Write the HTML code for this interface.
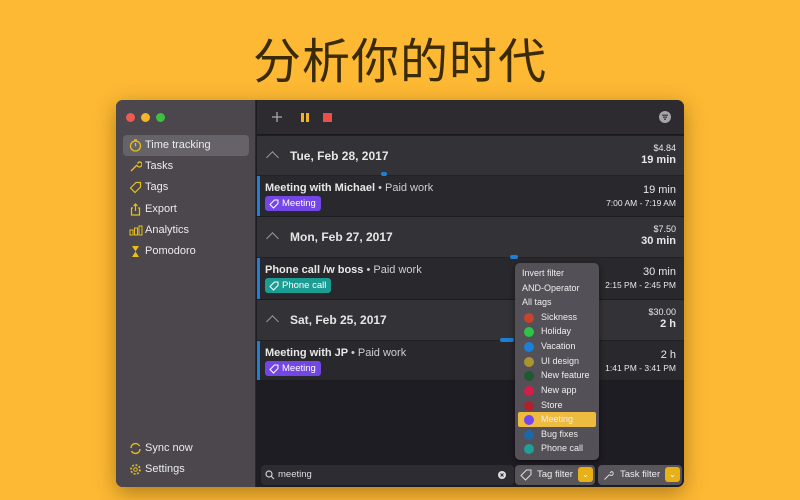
<!DOCTYPE html>
<html><head><meta charset="utf-8"><style>
*{margin:0;padding:0;box-sizing:border-box}
body{width:800px;height:500px;background:#fdb933;font-family:"Liberation Sans","Noto Sans CJK SC",sans-serif;position:relative;overflow:hidden}
.title{position:absolute;left:0;width:800px;top:22px;text-align:center;font-size:48px;color:#3a2a05;font-family:"Noto Sans CJK SC",sans-serif;letter-spacing:1px}
.win{position:absolute;left:116px;top:100px;width:568px;height:387px;border-radius:7px;overflow:hidden;background:#1f1d24;box-shadow:0 6px 20px rgba(80,50,0,.45)}
.side{position:absolute;left:0;top:0;width:140px;height:387px;background:#4b474d;border-right:1px solid #2a282c}
.dot{position:absolute;top:13px;width:9px;height:9px;border-radius:50%}
.nav{position:absolute;left:7px;width:126px;height:21px;border-radius:4px;color:#ececec;font-size:11px;line-height:21px;padding-left:22px}
.nav svg{position:absolute;left:6px;top:4px}
.sel{background:#66626a}
.tb{position:absolute;left:141px;top:0;width:427px;height:35px;background:#2d2b30;border-bottom:1px solid #1a191c}
.hdr{position:absolute;left:141px;width:427px;background:#333236;border-bottom:1px solid #222}
.ent{position:absolute;left:141px;width:427px;background:#29282c;border-bottom:1px solid #1c1b1e}
.hdr .d{position:absolute;left:33px;font-size:12px;font-weight:bold;color:#e6e6e6}
.chev{position:absolute;left:11px;width:9px;height:9px;border-left:1.5px solid #999;border-top:1.5px solid #999;transform:rotate(45deg)}
.r{position:absolute;right:8px;text-align:right;color:#e8e8e8}
.ent .bar{position:absolute;left:0;top:0;bottom:0;width:3px;background:#1f7ed6}
.ent .n{position:absolute;left:8px;top:6px;font-size:11px;font-weight:bold;color:#e8e8e8}
.ent .n span{font-weight:normal;color:#cfcfcf}
.tag{position:absolute;left:8px;top:20px;height:15px;border-radius:3px;font-size:9.5px;color:#fff;line-height:15px;padding:0 5px 0 17px}
.tag svg{position:absolute;left:4px;top:3px}
.bot{position:absolute;left:141px;top:363px;width:427px;height:24px;background:#1f1d24}
.pop{position:absolute;left:399px;top:163px;width:84px;height:197px;background:#545058;border-radius:5px;box-shadow:0 2px 6px rgba(0,0,0,.5)}
.pi{position:absolute;left:7px;font-size:9px;color:#eee}
.pc{position:absolute;left:9px;width:10px;height:10px;border-radius:50%}
.pl{position:absolute;left:26px;font-size:9px;color:#eee}
.sc{position:absolute;height:4px;border-radius:2px;background:#1f7ed6}
</style></head><body>
<div class="title">分析你的时代</div>
<div class="win">
 <div class="side">
  <div class="dot" style="left:10px;background:#ee5a52"></div>
  <div class="dot" style="left:25px;background:#f4b52b"></div>
  <div class="dot" style="left:40px;background:#3ec041"></div>
  <div class="nav sel" style="top:35px"><svg width="13" height="13" viewBox="0 0 13 13"><circle cx="6.5" cy="7" r="5" fill="none" stroke="#e7c11c" stroke-width="1.3"/><path d="M6.5 4v3.2M5 1h3" stroke="#e7c11c" stroke-width="1.3"/></svg>Time tracking</div>
  <div class="nav" style="top:56px"><svg width="13" height="13" viewBox="0 0 13 13"><path d="M2 11l6-6M8 5a2.5 2.5 0 1 0 2-3l-1.5 1.5" fill="none" stroke="#e7c11c" stroke-width="1.3"/></svg>Tasks</div>
  <div class="nav" style="top:77px"><svg width="13" height="13" viewBox="0 0 13 13"><path d="M1.5 7L7 1.5h4.5V6L6 11.5z" fill="none" stroke="#e7c11c" stroke-width="1.2"/></svg>Tags</div>
  <div class="nav" style="top:99px"><svg width="13" height="13" viewBox="0 0 13 13"><path d="M4 5H2.5v7h8V5H9M6.5 8V1M4.5 3l2-2 2 2" fill="none" stroke="#e7c11c" stroke-width="1.2"/></svg>Export</div>
  <div class="nav" style="top:120px"><svg width="14" height="13" viewBox="0 0 14 13"><rect x="1" y="6" width="3" height="5" fill="none" stroke="#e7c11c"/><rect x="5.5" y="4" width="3" height="7" fill="none" stroke="#e7c11c"/><rect x="10" y="2" width="3" height="9" fill="none" stroke="#e7c11c"/></svg>Analytics</div>
  <div class="nav" style="top:141px"><svg width="13" height="13" viewBox="0 0 13 13"><path d="M3 1h7L6.5 6.5zM3 12h7L6.5 6.5z" fill="#e7c11c"/></svg>Pomodoro</div>
  <div class="nav" style="top:338px"><svg width="13" height="13" viewBox="0 0 13 13"><path d="M2 6a4.5 4.5 0 0 1 8.5-2M11 7a4.5 4.5 0 0 1-8.5 2" fill="none" stroke="#e7c11c" stroke-width="1.4"/></svg>Sync now</div>
  <div class="nav" style="top:359px"><svg width="13" height="13" viewBox="0 0 13 13"><circle cx="6.5" cy="6.5" r="4.5" fill="none" stroke="#e7c11c" stroke-width="1.6" stroke-dasharray="2 1.5"/><circle cx="6.5" cy="6.5" r="1.8" fill="none" stroke="#e7c11c"/></svg>Settings</div>
 </div>
 <div class="tb">
  <svg style="position:absolute;left:14px;top:11px" width="12" height="12"><path d="M6 1v10M1 6h10" stroke="#aaa" stroke-width="1.3"/></svg>
  <div style="position:absolute;left:44px;top:13px;width:3px;height:9px;background:#f2b51e"></div>
  <div style="position:absolute;left:49px;top:13px;width:3px;height:9px;background:#f2b51e"></div>
  <div style="position:absolute;left:66px;top:13px;width:9px;height:9px;background:#ec4e4a"></div>
  <svg style="position:absolute;left:402px;top:11px" width="12" height="12"><circle cx="6" cy="6" r="6" fill="#a5a5a8"/><path d="M3 4.2h6M4 6.2h4M5 8.2h2" stroke="#2d2b30" stroke-width="1.1"/></svg>
 </div>
 <div class="hdr" style="top:36px;height:40px"><div class="chev" style="top:17px"></div><div class="d" style="top:13px">Tue, Feb 28, 2017</div><div class="r" style="top:7px;font-size:9px">$4.84</div><div class="r" style="top:18px;font-size:11px;font-weight:bold">19 min</div></div>
 <div class="ent" style="top:76px;height:41px"><div class="bar"></div><div class="n">Meeting with Michael <span>• Paid work</span></div><div class="tag" style="background:#7347e6"><svg width="10" height="10" viewBox="0 0 10 10"><path d="M1 5.5L5.5 1H9v3.5L4.5 9z" fill="none" stroke="#fff"/></svg>Meeting</div><div class="r" style="top:8px;font-size:11px">19 min</div><div class="r" style="top:22px;font-size:8.5px">7:00 AM - 7:19 AM</div></div>
 <div class="hdr" style="top:117px;height:41px"><div class="chev" style="top:17px"></div><div class="d" style="top:13px">Mon, Feb 27, 2017</div><div class="r" style="top:7px;font-size:9px">$7.50</div><div class="r" style="top:18px;font-size:11px;font-weight:bold">30 min</div></div>
 <div class="ent" style="top:158px;height:42px"><div class="bar"></div><div class="n">Phone call /w boss <span>• Paid work</span></div><div class="tag" style="background:#1b9d93"><svg width="10" height="10" viewBox="0 0 10 10"><path d="M1 5.5L5.5 1H9v3.5L4.5 9z" fill="none" stroke="#fff"/></svg>Phone call</div><div class="r" style="top:8px;font-size:11px">30 min</div><div class="r" style="top:22px;font-size:8.5px">2:15 PM - 2:45 PM</div></div>
 <div class="hdr" style="top:200px;height:41px"><div class="chev" style="top:17px"></div><div class="d" style="top:13px">Sat, Feb 25, 2017</div><div class="r" style="top:7px;font-size:9px">$30.00</div><div class="r" style="top:18px;font-size:11px;font-weight:bold">2 h</div></div>
 <div class="ent" style="top:241px;height:40px"><div class="bar"></div><div class="n">Meeting with JP <span>• Paid work</span></div><div class="tag" style="background:#7347e6"><svg width="10" height="10" viewBox="0 0 10 10"><path d="M1 5.5L5.5 1H9v3.5L4.5 9z" fill="none" stroke="#fff"/></svg>Meeting</div><div class="r" style="top:8px;font-size:11px">2 h</div><div class="r" style="top:22px;font-size:8.5px">1:41 PM - 3:41 PM</div></div>
 <div class="sc" style="left:265px;top:72px;width:6px"></div>
 <div class="sc" style="left:394px;top:155px;width:8px"></div>
 <div class="sc" style="left:384px;top:238px;width:14px"></div>
 <div class="bot">
  <div style="position:absolute;left:4px;top:2px;width:253px;height:20px;background:#2e2c33;border-radius:4px"></div>
  <svg style="position:absolute;left:8px;top:7px" width="10" height="10"><circle cx="4" cy="4" r="3" fill="none" stroke="#ccc" stroke-width="1.2"/><path d="M6.3 6.3L9 9" stroke="#ccc" stroke-width="1.2"/></svg>
  <div style="position:absolute;left:21px;top:6px;font-size:9.5px;color:#ddd">meeting</div>
  <svg style="position:absolute;left:241px;top:8px" width="8" height="8"><circle cx="4" cy="4" r="4" fill="#ddd"/><path d="M2.5 2.5l3 3M5.5 2.5l-3 3" stroke="#2e2c33" stroke-width="1"/></svg>
  <div style="position:absolute;left:258px;top:2px;width:80px;height:20px;background:#57545a;border-radius:4px"></div>
  <svg style="position:absolute;left:263px;top:6px" width="12" height="12" viewBox="0 0 12 12"><path d="M1 6.5L6.5 1H11v4.5L5.5 11z" fill="none" stroke="#ddd"/></svg>
  <div style="position:absolute;left:280px;top:6px;font-size:9.5px;color:#eee">Tag filter</div>
  <div style="position:absolute;left:321px;top:4px;width:15px;height:15px;background:#e8b117;border-radius:3px;color:#fff;font-size:8px;text-align:center;line-height:15px">⌄</div>
  <div style="position:absolute;left:341px;top:2px;width:84px;height:20px;background:#57545a;border-radius:4px"></div>
  <svg style="position:absolute;left:346px;top:6px" width="12" height="12"><path d="M1.5 10.5l5-5M6.5 5.5a2 2 0 1 0 2-3L7 4" fill="none" stroke="#ddd"/></svg>
  <div style="position:absolute;left:363px;top:6px;font-size:9.5px;color:#eee">Task filter</div>
  <div style="position:absolute;left:408px;top:4px;width:15px;height:15px;background:#e8b117;border-radius:3px;color:#fff;font-size:8px;text-align:center;line-height:15px">⌄</div>
 </div>
 <div class="pop">
  <div class="pi" style="top:5px">Invert filter</div>
  <div class="pi" style="top:20px">AND-Operator</div>
  <div class="pi" style="top:34px">All tags</div>
  <div style="position:absolute;left:3px;top:149px;width:78px;height:15px;background:#ecbb3f;border-radius:2px"></div>
  <div class="pc" style="top:50px;background:#c8432c"></div><div class="pl" style="top:49px">Sickness</div>
  <div class="pc" style="top:64px;background:#2ec447"></div><div class="pl" style="top:63px">Holiday</div>
  <div class="pc" style="top:79px;background:#1c7fd8"></div><div class="pl" style="top:78px">Vacation</div>
  <div class="pc" style="top:94px;background:#a99431"></div><div class="pl" style="top:93px">UI design</div>
  <div class="pc" style="top:108px;background:#1d5a2e"></div><div class="pl" style="top:107px">New feature</div>
  <div class="pc" style="top:123px;background:#d51d4a"></div><div class="pl" style="top:122px">New app</div>
  <div class="pc" style="top:138px;background:#b0212e"></div><div class="pl" style="top:137px">Store</div>
  <div class="pc" style="top:152px;background:#7445f0"></div><div class="pl" style="top:151px">Meeting</div>
  <div class="pc" style="top:167px;background:#1c67a8"></div><div class="pl" style="top:166px">Bug fixes</div>
  <div class="pc" style="top:181px;background:#1ea096"></div><div class="pl" style="top:180px">Phone call</div>
 </div>
</div>
</body></html>
